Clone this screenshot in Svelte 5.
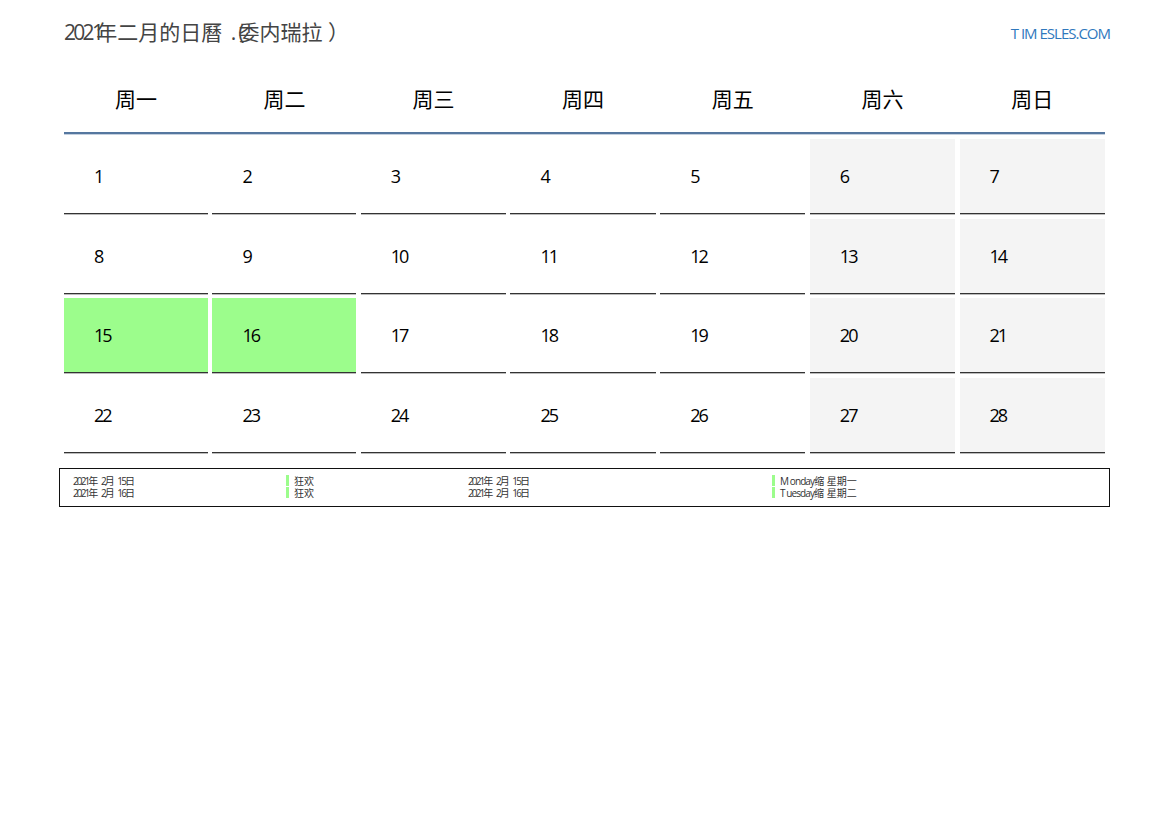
<script>
  const heads = ['周一','周二','周三','周四','周五','周六','周日'];
  const days = Array.from({length:28},(_, i)=>i+1);
  const cls = (d) => (d===15||d===16) ? 'day hol' : ((d%7===6||d%7===0) ? 'day wknd' : 'day');
  const legend = [
    {d:'15', w:'M onday', s:'缩 星期一'},
    {d:'16', w:'T uesday', s:'缩 星期二'}
  ];
</script>

<div class="page">
  <header class="top">
    <h1 class="title"><span class="l yr">2021</span>年二月的日曆 <span class="l pn">.(</span>委内瑞拉 ）</h1>
    <a class="site" href="#top">T IM ESLES.COM</a>
  </header>

  <div class="cal">
    <div class="heads">
      {#each heads as h}<div class="head">{h}</div>{/each}
    </div>
    <div class="grid">
      {#each days as d}
        <div class={cls(d)}><span class="num">{d}</span></div>
      {/each}
    </div>
  </div>

  <div class="legend">
    {#each legend as r}
      <div class="c"><span class="l">2021</span>年 <span class="l">2</span>月 <span class="l">{r.d}</span>日</div>
      <div class="c bar">狂欢</div>
      <div class="c"><span class="l">2021</span>年 <span class="l">2</span>月 <span class="l">{r.d}</span>日</div>
      <div class="c bar"><span class="l wk">{r.w}</span>{r.s}</div>
    {/each}
  </div>
</div>

<style>
  :global(body) { margin: 0; background: #fff; }
  .page {
    width: 1169px;
    height: 827px;
    box-sizing: border-box;
    padding: 20px 59px 0;
    font-family: "Open Sans", "Noto Sans CJK SC", sans-serif;
    color: #000;
  }
  .top {
    display: flex;
    justify-content: space-between;
    align-items: center;
    height: 26px;
    padding-left: 5px;
  }
  .title {
    margin: -2px 0 0;
    font-size: 21px;
    font-weight: 400;
    color: #444;
    line-height: 26px;
    white-space: nowrap;
  }
  .title .yr { letter-spacing: -2.7px; margin-right: -5px; }
  .title .pn { letter-spacing: 2px; margin: 0 -8px 0 3px; }
  .site {
    font-size: 15px;
    font-weight: 400;
    color: #2f78bd;
    text-decoration: none;
    letter-spacing: -1px;
    white-space: nowrap;
  }
  .cal { margin: 12px 4px 0 5px; }
  .heads, .grid {
    display: grid;
    grid-template-columns: 144px 144px repeat(5, 145.3px);
    column-gap: 4.4px;
  }
  .heads {
    height: 66px;
    padding-top: 8px;
    align-items: center;
    border-bottom: 2px solid #55779f;
    box-shadow: 0 1px 0 #c4d0df;
    margin-right: 1px;
  }
  .head { text-align: center; font-size: 21px; line-height: 28px; }
  .grid { margin-top: 5px; row-gap: 4.6px; grid-auto-rows: 75px; }
  .day {
    box-sizing: border-box;
    border-bottom: 1px solid #333;
    box-shadow: 0 1px 0 #bbb;
    display: flex;
    align-items: center;
    padding-left: 30px;
  }
  .wknd { background: #f4f4f4; }
  .hol { background: #9cfd8c; }
  .num { font-size: 18px; letter-spacing: -2px; line-height: 24px; }
  .legend {
    margin-top: 15px;
    width: 1051px;
    height: 39px;
    box-sizing: border-box;
    border: 1px solid #111;
    padding: 6px 0 0 13px;
    display: grid;
    grid-template-columns: 213px 182px 304px 1fr;
    grid-auto-rows: 12px;
    font-size: 10px;
    line-height: 12px;
    color: #333;
  }
  .c { white-space: nowrap; }
  .c .l { letter-spacing: -1.9px; }
  .c .wk { letter-spacing: -0.9px; }
  .bar { border-left: 3px solid #9cfd8c; padding-left: 5px; height: 11px; }
</style>
